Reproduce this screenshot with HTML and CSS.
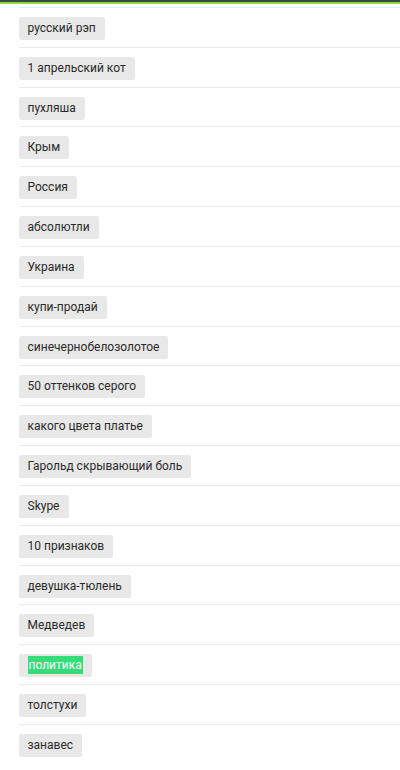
FILE: index.html
```html
<!DOCTYPE html>
<html lang="ru">
<head>
<meta charset="utf-8">
<link rel="stylesheet" href="styles.css">
</head>
<body>
<div class="topbar"></div>
<ul class="tags">
  <li class="row"><span class="tag">русский рэп</span></li>
  <li class="row"><span class="tag">1 апрельский кот</span></li>
  <li class="row"><span class="tag">пухляша</span></li>
  <li class="row"><span class="tag">Крым</span></li>
  <li class="row"><span class="tag">Россия</span></li>
  <li class="row"><span class="tag">абсолютли</span></li>
  <li class="row"><span class="tag">Украина</span></li>
  <li class="row"><span class="tag">купи-продай</span></li>
  <li class="row"><span class="tag">синечернобелозолотое</span></li>
  <li class="row"><span class="tag">50 оттенков серого</span></li>
  <li class="row"><span class="tag">какого цвета платье</span></li>
  <li class="row"><span class="tag">Гарольд скрывающий боль</span></li>
  <li class="row"><span class="tag">Skype</span></li>
  <li class="row"><span class="tag">10 признаков</span></li>
  <li class="row"><span class="tag">девушка-тюлень</span></li>
  <li class="row"><span class="tag">Медведев</span></li>
  <li class="row"><span class="tag"><mark class="hl">политика</mark></span></li>
  <li class="row"><span class="tag">толстухи</span></li>
  <li class="row"><span class="tag">занавес</span></li>
</ul>
</body>
</html>
```
FILE: styles.css
```css
html, body {
  margin: 0;
  padding: 0;
  background: #fff;
}
body {
  font-family: Roboto, "Liberation Sans", Arial, sans-serif;
  font-size: 12px;
  color: #2a2a2a;
  overflow: hidden;
}
.topbar {
  height: 4px;
  background: linear-gradient(to bottom, #3a4a3a 0, #3a4a3a 2px, #8fd44f 2px, #8fd44f 4px);
}
.tags {
  list-style: none;
  margin: 3px 0 0 0;
  padding: 0 0 0 19px;
}
.row {
  border-top: 1px solid #ebebeb;
  padding: 9px 0 6.83px 0;
  display: flex;
}
.tag {
  display: inline-block;
  background: #e8e8e8;
  border-radius: 2px;
  height: 23px;
  line-height: 23px;
  padding: 0 9px 0 8.5px;
  white-space: nowrap;
}
.hl {
  background: #33dd77;
  color: #fff;
  padding: 2px 1px;
}
```
